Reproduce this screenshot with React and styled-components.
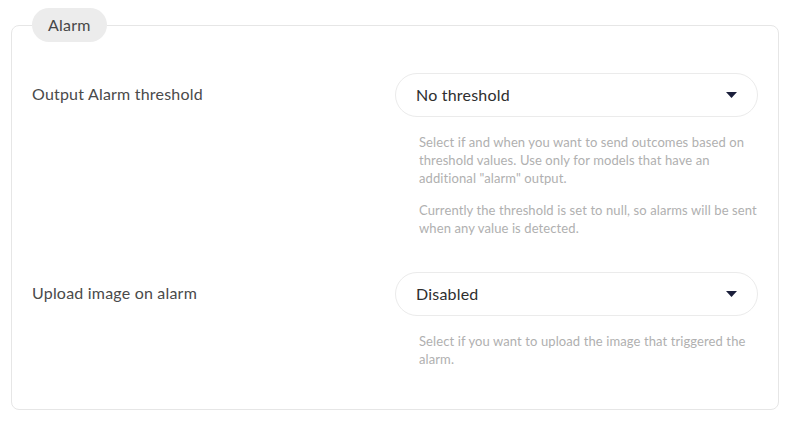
import React from 'react';
import styled, { createGlobalStyle } from 'styled-components';

const GlobalStyle = createGlobalStyle`
    html, body {
        margin: 0;
        padding: 0;
        background: #ffffff;
    }
    body {
        font-family: Lato, "Open Sans", sans-serif;
        color: #3a3a3a;
    }
`;

const fields = [
    {
        label: 'Output Alarm threshold',
        value: 'No threshold',
        help: [
            'Select if and when you want to send outcomes based on threshold values. Use only for models that have an additional "alarm" output.',
            'Currently the threshold is set to null, so alarms will be sent when any value is detected.',
        ],
    },
    {
        label: 'Upload image on alarm',
        value: 'Disabled',
        help: ['Select if you want to upload the image that triggered the alarm.'],
    },
];

function Caret() {
    return (
        <svg width="11" height="6" viewBox="0 0 11 6">
            <path d="M0 0 H11 L5.5 6 Z" fill="#1b1f3b" />
        </svg>
    );
}

function App() {
    return (
        <Page>
            <GlobalStyle />
            <Card>
                <Legend>Alarm</Legend>
                <Rows>
                    {fields.map(f => (
                        <Row key={f.label}>
                            <Label>{f.label}</Label>
                            <Control>
                                <Select>
                                    <span>{f.value}</span>
                                    <Caret />
                                </Select>
                                <Help>
                                    {f.help.map(p => <p key={p}>{p}</p>)}
                                </Help>
                            </Control>
                        </Row>
                    ))}
                </Rows>
            </Card>
        </Page>
    );
}

const Page = styled.div`
    padding: 8px 11px 14px;
`;

const Card = styled.fieldset`
    margin: 0;
    min-width: 0;
    border: 1px solid #e6e6e6;
    border-radius: 8px;
    padding: 0 20px 41px;
`;

const Legend = styled.legend`
    height: 34px;
    box-sizing: border-box;
    padding: 0 16px;
    border-radius: 17px;
    background: #ececec;
    color: #474747;
    font-size: 16px;
    letter-spacing: 0.2px;
    line-height: 33px;
`;

const Rows = styled.div`
    display: grid;
    row-gap: 35px;
    padding-top: 31px;
`;

const Row = styled.div`
    display: grid;
    grid-template-columns: 1fr 1fr;
    align-items: start;
`;

const Label = styled.div`
    font-size: 16px;
    letter-spacing: 0.2px;
    line-height: 42px;
    color: #4a4a4a;
`;

const Control = styled.div`
    display: flex;
    flex-direction: column;
`;

const Select = styled.div`
    height: 44px;
    box-sizing: border-box;
    display: flex;
    align-items: center;
    justify-content: space-between;
    padding: 0 20px 2px 20px;
    border: 1px solid #ebebeb;
    border-radius: 22px;
    background: #fff;
    font-size: 16px;
    letter-spacing: 0.2px;
    color: #2e2e2e;
    svg {
        margin-top: 2px;
    }
`;

const Help = styled.div`
    padding: 16px 0 0 24px;
    margin-right: -8px;
    font-size: 13px;
    letter-spacing: 0.1px;
    line-height: 18px;
    color: #b0b0b0;
    p {
        margin: 0 0 14px;
    }
    p:last-child {
        margin-bottom: 0;
    }
`;

export default App;
